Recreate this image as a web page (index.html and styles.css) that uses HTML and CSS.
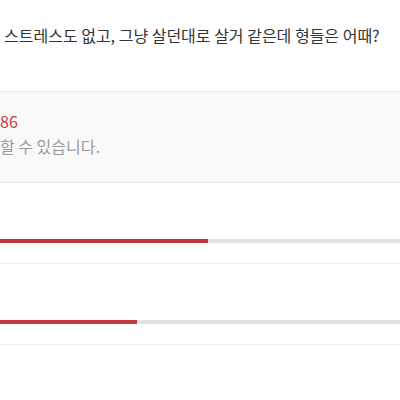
FILE: index.html
```html
<!DOCTYPE html>
<html>
<head>
  <title>투표</title>
  <link rel="stylesheet" href="styles.css">
</head>
<body>
  <div class="post">
    <p class="question">스트레스도 없고, 그냥 살던대로 살거 같은데 형들은 어때?</p>
    <div class="notice">
      <div class="count">86</div>
      <div class="desc">할 수 있습니다.</div>
    </div>
    <div class="option">
      <div class="track"><div class="fill" style="width: 52%"></div></div>
    </div>
    <div class="option">
      <div class="track"><div class="fill" style="width: 34.3%"></div></div>
    </div>
  </div>
</body>
</html>
```

FILE: styles.css
```css
body {
  font-family: "Noto Sans CJK KR", "Noto Sans", sans-serif;
  background-color: #fff;
  margin: 0;
  padding: 0;
}

.post {
  width: 400px;
}

.question {
  margin: 0;
  padding: 24px 0 0 4px;
  height: 67px;
  font-size: 16px;
  line-height: 22px;
  color: #333;
  white-space: nowrap;
}

.notice {
  background-color: #f9f9f9;
  border-top: 1px solid #ececec;
  border-bottom: 1px solid #ececec;
  height: 92px;
  box-sizing: border-box;
  padding-top: 19px;
}

.count {
  font-size: 16px;
  line-height: 21px;
  margin-bottom: 2px;
  color: #c0393f;
}

.desc {
  font-size: 16px;
  line-height: 24px;
  color: #999;
}

.option {
  height: 81px;
  border-bottom: 1px solid #efefef;
  box-sizing: border-box;
  padding-top: 56px;
}

.track {
  height: 4px;
  background-color: #e2e2e2;
}

.fill {
  height: 100%;
  background-color: #c0393f;
}
```
